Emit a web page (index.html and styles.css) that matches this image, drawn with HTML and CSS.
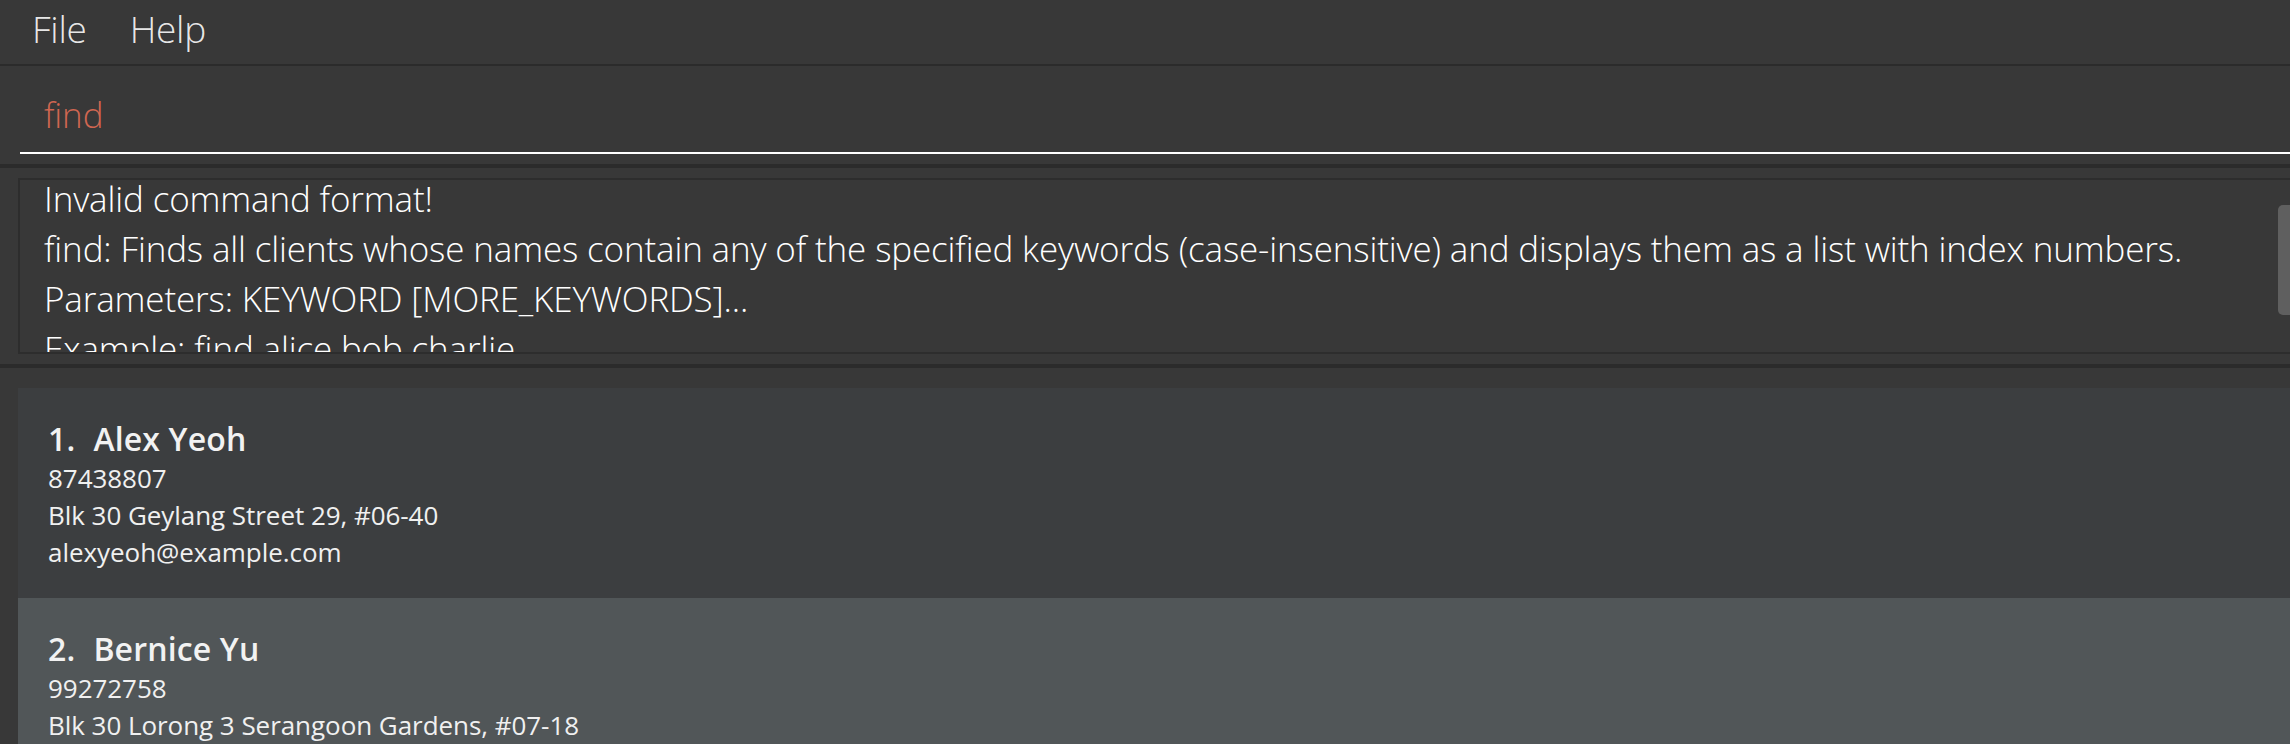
FILE: index.html
```html
<!DOCTYPE html>
<html lang="en">
<head>
<meta charset="utf-8">
<title>Address App</title>
<link rel="stylesheet" href="styles.css">
</head>
<body>
<div class="app">
  <nav class="menubar">
    <span class="menu">File</span>
    <span class="menu">Help</span>
  </nav>
  <section class="pane command-pane">
    <div class="command-field">
      <span class="command-text">find</span>
    </div>
  </section>
  <section class="pane result-pane">
    <div class="result-box">
      <div class="result-text">
        <p class="result-line">Invalid command format!</p>
        <p class="result-line">find: Finds all clients whose names contain any of the specified keywords (case-insensitive) and displays them as a list with index numbers.</p>
        <p class="result-line">Parameters: KEYWORD [MORE_KEYWORDS]...</p>
        <p class="result-line">Example: find alice bob charlie</p>
      </div>
      <div class="scroll-thumb"></div>
    </div>
  </section>
  <section class="pane list-pane">
    <div class="card card-even">
      <div class="card-title"><span class="card-id">1.</span><span class="card-name">Alex Yeoh</span></div>
      <div class="card-label">87438807</div>
      <div class="card-label">Blk 30 Geylang Street 29, #06-40</div>
      <div class="card-label">alexyeoh@example.com</div>
    </div>
    <div class="card card-odd">
      <div class="card-title"><span class="card-id">2.</span><span class="card-name">Bernice Yu</span></div>
      <div class="card-label">99272758</div>
      <div class="card-label">Blk 30 Lorong 3 Serangoon Gardens, #07-18</div>
      <div class="card-label">berniceyu@example.com</div>
    </div>
  </section>
</div>
</body>
</html>
```
FILE: styles.css
```css
html, body {
  margin: 0;
  padding: 0;
  background: #383838;
  overflow: hidden;
  height: 744px;
}

.app {
  width: 2330px;
  display: flex;
  flex-direction: column;
  font-family: "Open Sans", "Noto Sans", sans-serif;
  color: #ffffff;
}

.menubar {
  height: 64px;
  display: flex;
  align-items: flex-start;
  gap: 43px;
  padding-left: 32px;
  box-sizing: border-box;
}

.menu {
  font-size: 37px;
  font-weight: 300;
  line-height: 58px;
  color: rgba(255, 255, 255, 0.9);
  letter-spacing: -0.25px;
}

.pane {
  background: #383838;
  box-sizing: border-box;
}

.command-pane {
  border-top: 2px solid #2b2b2b;
  padding: 0 0 10px 20px;
}

.command-field {
  height: 88px;
  box-sizing: border-box;
  border-bottom: 2px solid #ffffff;
  padding-left: 24px;
  display: flex;
  align-items: flex-start;
}

.command-text {
  color: #d06651;
  font-size: 35px;
  font-weight: 300;
  line-height: 50px;
  margin-top: 24px;
  letter-spacing: -0.15px;
}

.result-pane {
  border-top: 4px solid #2b2b2b;
  padding: 10px 0 10px 18px;
}

.result-box {
  position: relative;
  height: 176px;
  box-sizing: border-box;
  border: 2px solid #2d2d2d;
  overflow: hidden;
}

.result-text {
  margin-top: -6px;
  padding-left: 24px;
}

.result-line {
  margin: 0;
  font-size: 35px;
  font-weight: 300;
  line-height: 50px;
  letter-spacing: -0.15px;
  white-space: nowrap;
}

.scroll-thumb {
  position: absolute;
  left: 2258px;
  top: 25px;
  width: 20px;
  height: 110px;
  border-radius: 5px;
  background: #5f5f5f;
}

.list-pane {
  border-top: 4px solid #2b2b2b;
  padding: 20px 0 0 18px;
}

.card {
  height: 210px;
  box-sizing: border-box;
  padding: 30px 0 0 30px;
}

.card-even {
  background: #3c3e40;
}

.card-odd {
  background: #515658;
}

.card-title {
  display: flex;
  gap: 18px;
  font-size: 32px;
  font-weight: 600;
  line-height: 42px;
  letter-spacing: 0.15px;
  color: #f2f2f2;
}

.card-label {
  font-size: 26px;
  font-weight: 400;
  line-height: 37px;
  letter-spacing: -0.05px;
  color: #f0f0f0;
}
```
